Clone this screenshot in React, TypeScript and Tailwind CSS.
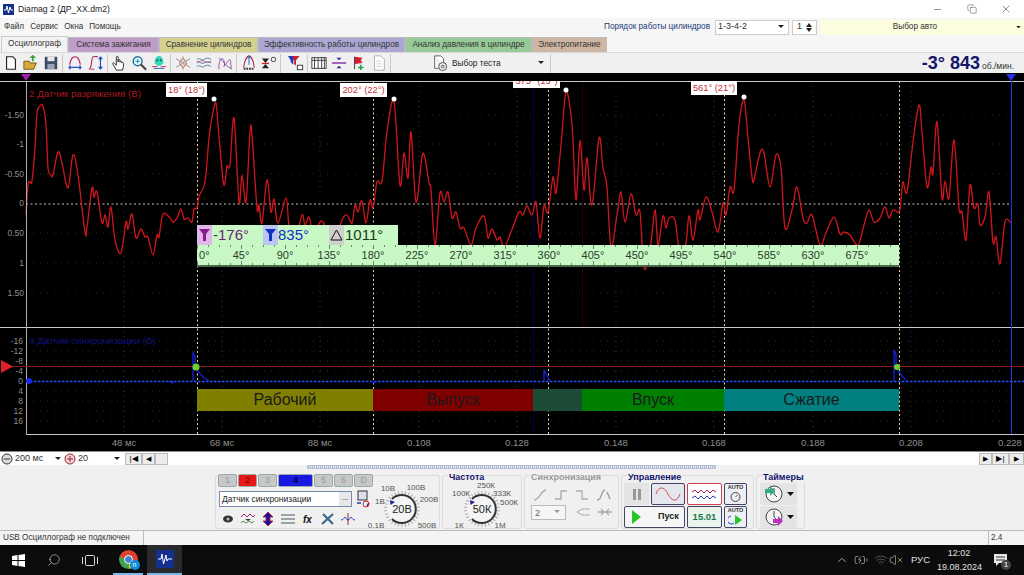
import { ChevronUp, Search, X, Minus, Copy, VolumeX, Wifi, BatteryCharging } from "lucide-react";
import type { ReactNode } from "react";

const font = { fontFamily: '"Liberation Sans", Arial, sans-serif' };

const wave: [number, number][] = [
  [26, 215], [28, 185], [30, 182], [32, 181], [35, 148], [37, 113], [40, 106], [43, 106], [46, 125], [48, 168], [51, 175], [53, 175], [58, 152], [62, 163], [68, 188], [73, 155], [78, 175], [85, 232], [87, 227], [92, 188], [94, 197], [97, 192], [102, 223], [105, 215], [108, 227], [111, 207], [115, 240], [121, 253], [126, 222], [128, 229], [132, 214], [136, 238], [141, 229], [145, 237], [148, 237], [153, 255], [157, 235], [159, 237], [163, 214], [170, 218], [173, 222], [177, 218], [181, 209], [184, 219], [188, 218], [192, 222], [194, 209], [197, 208], [199, 196], [205, 182], [209, 138], [213, 112], [216, 103], [218, 125], [223, 180], [225, 182], [227, 166], [230, 165], [234, 118], [239, 202], [242, 175], [246, 202], [250, 132], [252, 136], [257, 208], [259, 205], [262, 223], [267, 180], [271, 212], [274, 199], [278, 223], [286, 198], [289, 225], [295, 240], [302, 215], [305, 225], [309, 217], [313, 232], [320, 222], [323, 222], [328, 232], [335, 240], [342, 220], [347, 215], [352, 223], [355, 205], [358, 212], [362, 201], [366, 223], [370, 200], [373, 208], [377, 182], [382, 181], [387, 132], [394, 102], [400, 185], [404, 153], [408, 178], [411, 132], [416, 202], [422, 157], [425, 158], [429, 183], [431, 190], [435, 245], [440, 193], [444, 202], [448, 192], [452, 218], [456, 212], [460, 228], [464, 228], [471, 245], [476, 228], [484, 216], [488, 238], [492, 229], [497, 240], [500, 237], [504, 248], [511, 232], [519, 212], [523, 215], [527, 206], [532, 215], [536, 202], [540, 238], [544, 206], [548, 212], [553, 177], [556, 193], [561, 145], [566, 92], [572, 125], [576, 200], [580, 141], [584, 190], [587, 158], [592, 205], [599, 138], [603, 168], [607, 187], [611, 247], [617, 215], [621, 192], [625, 222], [631, 194], [636, 215], [640, 212], [644, 268], [650, 250], [655, 210], [658, 245], [663, 216], [666, 228], [669, 218], [675, 220], [679, 248], [685, 250], [689, 216], [693, 240], [698, 210], [700, 220], [706, 197], [712, 212], [718, 232], [723, 203], [726, 215], [730, 187], [734, 190], [739, 125], [744, 100], [748, 138], [752, 177], [754, 180], [760, 153], [764, 153], [770, 187], [776, 155], [781, 168], [785, 228], [792, 210], [797, 187], [803, 218], [807, 223], [812, 215], [820, 245], [826, 233], [834, 217], [840, 234], [844, 232], [850, 235], [858, 245], [864, 225], [869, 210], [874, 222], [880, 218], [885, 207], [889, 218], [893, 210], [899, 212], [901, 200], [903, 182], [907, 192], [913, 142], [919, 105], [922, 132], [927, 187], [931, 167], [933, 173], [937, 122], [942, 198], [945, 181], [949, 198], [954, 140], [959, 208], [962, 212], [966, 240], [970, 185], [974, 208], [978, 204], [980, 225], [985, 217], [989, 192], [993, 242], [996, 237], [1000, 264], [1005, 222], [1011, 223],
];

// catmull-rom through the trace points
function smooth(pts: [number, number][]) {
  let d = `M${pts[0][0]} ${pts[0][1]}`;
  for (let i = 0; i < pts.length - 1; i++) {
    const p0 = pts[Math.max(0, i - 1)];
    const p1 = pts[i];
    const p2 = pts[i + 1];
    const p3 = pts[Math.min(pts.length - 1, i + 2)];
    const c1x = p1[0] + (p2[0] - p0[0]) / 6;
    const c1y = p1[1] + (p2[1] - p0[1]) / 6;
    const c2x = p2[0] - (p3[0] - p1[0]) / 6;
    const c2y = p2[1] - (p3[1] - p1[1]) / 6;
    d += ` C${c1x.toFixed(1)} ${c1y.toFixed(1)} ${c2x.toFixed(1)} ${c2y.toFixed(1)} ${p2[0]} ${p2[1]}`;
  }
  return d;
}

const topLabels: [string, number][] = [["-1.50", 115], ["-1", 144], ["-0.50", 174], ["0", 203], ["0.50", 233], ["1", 263], ["1.50", 293]];
const lowLabels: [string, number][] = [["-16", 341], ["-12", 351], ["-8", 361], ["-4", 371], ["0", 381], ["4", 391], ["8", 401], ["12", 411], ["16", 421]];
const xLabels: [string, number][] = [["48 мс", 124], ["68 мс", 222], ["88 мс", 320], ["0.108", 419], ["0.128", 517], ["0.148", 616], ["0.168", 714], ["0.188", 813], ["0.208", 911], ["0.228", 1010]];
const degrees = [0, 45, 90, 135, 180, 225, 270, 315, 360, 405, 450, 495, 540, 585, 630, 675];
const tabs = [
  { name: "Система зажигания", w: "w-[91px]", bg: "bg-[#c09cc8]" },
  { name: "Сравнение цилиндров", w: "w-[99px]", bg: "bg-[#d4d190]" },
  { name: "Эффективность работы цилиндров", w: "w-[147px]", bg: "bg-[#aaa8d2]" },
  { name: "Анализ давления в цилиндре", w: "w-[127px]", bg: "bg-[#96ca96]" },
  { name: "Электропитание", w: "w-[75px]", bg: "bg-[#cfb6a2]" },
];

function Ic({ children, w = "w-[20px]" }: { children: ReactNode; w?: string }) {
  return (
    <div className={`${w} h-[20px] flex items-center justify-center shrink-0`}>
      <svg width="16" height="16" viewBox="0 0 18 18" fill="none">
        {children}
      </svg>
    </div>
  );
}

function Sep() {
  return <div className="w-[1px] h-[19px] bg-[#c9c9c9] mx-[1px] shrink-0" />;
}

function Toolbar() {
  return (
    <div className="h-[21px] bg-[#f0f0f0] border-t border-[#d8d8d8] flex items-center pl-[1px]">
      <Ic><path d="M4 2h7l3 3v11H4z" stroke="#222" fill="#fff" strokeWidth="1.300" /></Ic>
      <Ic><path d="M1 7h6l1 2h7l-3 7H1z" fill="#d8a838" stroke="#6a5010" /><path d="M10 7V3H7l4-3 4 3h-3v4z" fill="#3a9a3a" /></Ic>
      <Ic><path d="M2 2h14v14H2z" fill="#3c4a68" /><path d="M5 2h8v5H5z" fill="#e8e8e8" /><path d="M5 10h8v6H5z" fill="#9aa4b8" /></Ic>
      <Sep />
      <Ic w="w-[21px]"><path d="M3 11C4 4 7 2 9 2s5 2 6 9" stroke="#b02060" strokeWidth="1.300" /><path d="M2 14h14M2 14l2-2M2 14l2 2M16 14l-2-2M16 14l-2 2" stroke="#1c4fc0" strokeWidth="1.300" /></Ic>
      <Ic w="w-[21px]"><path d="M1 16c4 0 2-13 5-14s4 0 5 0" stroke="#b02060" strokeWidth="1.200" /><path d="M3 16h4" stroke="#b02060" /><path d="M14 2v14M14 2l-2 3M14 2l2 3M14 16l-2-3M14 16l2-3" stroke="#1c4fc0" strokeWidth="1.300" /></Ic>
      <Sep />
      <Ic><path d="M6 17l-4-7c-.5-1 1-2 2-.5l2 2V2.500c0-1.500 2-1.500 2 0V8V6c0-1.500 2-1.500 2 0v2c0-1.500 2-1.500 2 0v1c0-1 2-1 2 .5V13l-1 4z" stroke="#222" fill="#fff" strokeWidth="1" /></Ic>
      <Ic><circle cx="7.500" cy="7" r="5" stroke="#2a6a90" strokeWidth="1.600" fill="#dff" /><path d="M5 7h5M7.500 4.500v5" stroke="#2080b0" /><path d="M11 10.500l6 6" stroke="#444" strokeWidth="2.400" /></Ic>
      <Ic><path d="M4 9C4 3 7 1 9 1s5 2 5 8l-3 3H7z" fill="#30d8c0" /><path d="M1 13h6M11 13h6" stroke="#c03050" /><path d="M3 15h12" stroke="#2050a0" /><circle cx="7" cy="6" r="1.200" fill="#206060" /><circle cx="11" cy="6" r="1.200" fill="#206060" /></Ic>
      <Sep />
      <Ic w="w-[21px]"><path d="M1 4l16 10M1 14l16-10" stroke="#888" /><path d="M9 3l4 6-4 6-4-6z" stroke="#b05050" /><path d="M9 1v16" stroke="#d0b080" /></Ic>
      <Ic w="w-[21px]"><path d="M1 5c3-3 5 2 8 0s5-2 8 0M1 9c3-3 5 2 8 0s5-2 8 0M1 13c3-3 5 2 8 0s5-2 8 0" stroke="#4a78a0" /><path d="M1 7c3 2 5-2 8 0s5 2 8 0" stroke="#b06090" /></Ic>
      <Ic w="w-[21px]"><path d="M2 16C2 4 6 1 8 7s-3 9 2 3 5-9 6 6" stroke="#a040a0" /><path d="M2 4c5 1 8 10 14 11" stroke="#406090" /></Ic>
      <Sep />
      <Ic w="w-[21px]"><path d="M3 14C4 5 7 1 9 1s5 4 6 13" stroke="#a02040" strokeWidth="1.200" /><path d="M9 2v9M9 2L7 4M9 2l2 2" stroke="#1c4fc0" /><path d="M3 15.500h12" stroke="#333" strokeWidth="2.400" strokeDasharray="2 1" /></Ic>
      <Ic><path d="M1 4h8L5 9zM1 15h8L5 10z" fill="#222" /><path d="M1 9.500h8" stroke="#d02020" strokeWidth="1.500" /><circle cx="14" cy="5" r="2.500" stroke="#333" /></Ic>
      <Sep />
      <div className="w-[3px] shrink-0" />
      <Ic w="w-[21px]"><path d="M0 1h9L6 6v5L3 8V6z" fill="#1c3cc0" /><path d="M5 1h8L9 6v6L7 10V6z" fill="#d02020" /><rect x="10.500" y="11.500" width="6" height="5" stroke="#333" fill="#fff" /></Ic>
      <Sep />
      <Ic><rect x="1" y="3" width="16" height="12" stroke="#333" fill="#fff" /><path d="M1 6h16M4 3v12M8 3v12M12 3v12M15 3v12" stroke="#333" /></Ic>
      <Ic><path d="M1 9h16" stroke="#8020a0" strokeWidth="1.500" /><path d="M6 3h6L9 6zM6 15h6L9 12z" fill="#303090" /></Ic>
      <Ic><path d="M4 2l9 1-2 3 2 3-9 1z" fill="#d02030" /><path d="M4 2v14" stroke="#333" /><path d="M8 14h6M11 11v6" stroke="#20a040" strokeWidth="1.600" /></Ic>
      <Ic><path d="M4 1h7l4 4v12H4z" stroke="#aaa" fill="#fff" /><path d="M6 7h6M6 10h6M6 13h6" stroke="#ccc" /></Ic>
      <Sep />
      <div className="w-[38px] shrink-0" />
      <Ic><path d="M3 1h7l3 3v5M3 1v14h4" stroke="#555" fill="#fff" /><circle cx="12" cy="13" r="4.500" stroke="#444" fill="#eee" /><circle cx="12" cy="13" r="1.500" stroke="#444" /></Ic>
      <span className="text-[8.300px] text-[#222] ml-[2px] w-[86px] shrink-0">Выбор теста</span>
      <svg width="6" height="4" viewBox="0 0 6 4" className="mr-[5px] shrink-0"><path d="M0 0h6L3 3z" fill="#222" /></svg>
      <Sep />
      <div className="flex-1 flex justify-end items-baseline pr-[10px]">
        <span className="text-[18px] leading-[20px] font-bold text-[#14146e]">-3° 843</span>
        <span className="text-[8.500px] text-[#333] ml-[2px]">об./мин.</span>
      </div>
    </div>
  );
}

function Chart() {
  return (
    <div className="relative h-[378px] bg-black overflow-hidden text-[#8e8e8e] text-[10px]">
      <svg className="absolute inset-0 w-full h-full" viewBox="0 73 1024 378" fill="none">
        {/* faint grid */}
        {[124, 222, 320, 419, 517, 616, 714, 813, 911].map((x) => (
          <path key={x} d={`M${x} 81V434`} stroke="#333" strokeDasharray="1 4" />
        ))}
        {[115, 144, 174, 233, 263, 293, 341, 351, 361, 371, 391, 401, 411, 421].map((y) => (
          <path key={y} d={`M26 ${y}H1011`} stroke="#2c2c2c" strokeDasharray="1 6" />
        ))}
        <path d="M533.500 81V434" stroke="#000050" />
        <path d="M582.500 81V327" stroke="#2a0000" />
        {[197.5, 373.5, 548.5, 724.5, 899.5].map((x) => (
          <path key={x} d={`M${x} 81V434`} stroke="#e8dca0" strokeDasharray="2 2.500" />
        ))}
        <path d="M26 204H1011" stroke="#c8c8c8" strokeDasharray="2 2.500" />
        <path d={smooth(wave)} stroke="#d0161c" strokeWidth="1.300" strokeLinejoin="round" />
        {/* axes */}
        <path d="M0 81.500H1024M0 327.500H1024M26 434.500H1024" stroke="#c8c8c8" />
        <path d="M26.500 81V434" stroke="#b0b0b0" />
        <path d="M1011.500 81V434" stroke="#2a30e8" />
        <path d="M21 74h10l-5 7z" fill="#a020b0" />
        <path d="M1006 74h10l-5 7z" fill="#2a30e8" />
        {/* sync channel */}
        <path d="M12 366.500H1024" stroke="#8a1a1a" />
        <path d="M26 381.500H1024" stroke="#3050ff" strokeWidth="1.500" strokeDasharray="2.500 1.500" />
        <path d="M193 381V353l2 3v12l8 9 6 4M544 381v-11l3 6 3 5M894 381V350l2 4v14l6 8 5 5M169 381l3 2 3-2M371 381l3 2 3-2" stroke="#1420e0" strokeWidth="1.300" />
        <path d="M1 360l12 6.500-12 6.500z" fill="#e0202a" />
        <circle cx="29" cy="381" r="3" fill="#1828e8" />
        <circle cx="196" cy="367" r="3.500" fill="#70d030" />
        <circle cx="897" cy="367" r="3" fill="#70d030" />
        <circle cx="214" cy="99" r="2.500" fill="#fff" />
        <circle cx="394" cy="99" r="2.500" fill="#fff" />
        <circle cx="566" cy="90" r="2.500" fill="#fff" />
        <circle cx="744" cy="97" r="2.500" fill="#fff" />
      </svg>

      <div className="absolute left-[29px] top-[14px] text-[9.800px] text-[#a81820]">2 Датчик разряжения (В)</div>
      <div className="absolute left-[29px] top-[261px] text-[9.800px] text-[#10107c]">4 Датчик синхронизации (В)</div>

      {topLabels.map(([t, y]) => (
        <div key={t} className="absolute left-0 w-[24px] text-right text-[8.500px] leading-[10px]" style={{ top: y - 73 - 5 }}>{t}</div>
      ))}
      {lowLabels.map(([t, y]) => (
        <div key={t} className="absolute left-0 w-[23px] text-right text-[8.500px] leading-[10px]" style={{ top: y - 73 - 5 }}>{t}</div>
      ))}
      {xLabels.map(([t, x]) => (
        <div key={t} className="absolute w-[40px] text-center text-[9.500px] leading-[12px]" style={{ left: x - 20, top: 364 }}>{t}</div>
      ))}

      <div className="absolute left-[166px] top-[10px] w-[41px] h-[14px] bg-white text-[#c03038] text-[9.300px] leading-[14px] text-center">18° (18°)</div>
      <div className="absolute left-[340px] top-[10px] w-[47px] h-[14px] bg-white text-[#c03038] text-[9.300px] leading-[14px] text-center">202° (22°)</div>
      <div className="absolute left-[513px] top-[8px] w-[47px] h-[7px] bg-white text-[#c03038] text-[9.300px] leading-[14px] flex items-end justify-center overflow-hidden">375° (15°)</div>
      <div className="absolute left-[691px] top-[8px] w-[46px] h-[14px] bg-white text-[#c03038] text-[9.300px] leading-[14px] text-center">561° (21°)</div>

      {/* measure box + degree ruler */}
      <div className="absolute left-[197px] top-[152px] w-[702px]">
        <div className="w-[201px] h-[20px] bg-[#c8f8c4] flex items-center text-[15px] leading-[20px]">
          <div className="w-[15px] h-full bg-[#e0b8e8] flex items-center justify-center">
            <svg width="13" height="14" viewBox="0 0 13 14"><path d="M1 1h11L8 6v7H5V6z" fill="#8a1a90" /></svg>
          </div>
          <span className="text-[#6a2a70] w-[51px] pl-[1px]">-176°</span>
          <div className="w-[15px] h-full bg-[#bcc4f4] flex items-center justify-center">
            <svg width="13" height="14" viewBox="0 0 13 14"><path d="M1 1h11L8 6v7H5V6z" fill="#1430c0" /></svg>
          </div>
          <span className="text-[#1430c0] w-[51px]">835°</span>
          <div className="w-[15px] h-full bg-[#cfcfcf] flex items-center justify-center">
            <svg width="13" height="12" viewBox="0 0 13 12"><path d="M6.500 1L12 11H1z" stroke="#111" fill="none" /></svg>
          </div>
          <span className="text-[#1a3a1a] pl-[1px]">1011°</span>
        </div>
        <div className="relative h-[22px] bg-[#c8f8c4] flex border-b-2 border-[#4a6a4a] text-[11px] text-[#2c3c2c]">
          {degrees.map((d) => (
            <div key={d} className="w-[44px] h-full flex items-center shrink-0">
              <span className={d === 0 ? "pl-[2px]" : "-translate-x-1/2"}>{d}°</span>
            </div>
          ))}
          <div className="absolute inset-x-0 top-0 h-[2px] bg-[repeating-linear-gradient(90deg,#6a8a6a_0,#6a8a6a_1px,transparent_1px,transparent_11px)]" />
          <div className="absolute inset-x-0 top-0 h-[4px] bg-[repeating-linear-gradient(90deg,#6a8a6a_0,#6a8a6a_1px,transparent_1px,transparent_44px)]" />
          <div className="absolute inset-x-0 bottom-0 h-[2px] bg-[repeating-linear-gradient(90deg,#6a8a6a_0,#6a8a6a_1px,transparent_1px,transparent_11px)]" />
          <div className="absolute inset-x-0 bottom-0 h-[4px] bg-[repeating-linear-gradient(90deg,#6a8a6a_0,#6a8a6a_1px,transparent_1px,transparent_44px)]" />
        </div>
      </div>

      {/* strokes */}
      <div className="absolute left-[197px] top-[316px] w-[702px] h-[22px] flex text-[16px] leading-[22px] text-center text-[#1a1a1a]">
        <div className="w-[176px] bg-[#808000]">Рабочий</div>
        <div className="w-[160px] bg-[#800000]">Выпуск</div>
        <div className="w-[49px] bg-[#1c4c38]" />
        <div className="w-[142px] bg-[#008000]">Впуск</div>
        <div className="w-[175px] bg-[#008080]">Сжатие</div>
      </div>
    </div>
  );
}

function ScrollRow() {
  return (
    <div className="h-[14px] bg-white flex items-center border-t border-[#888] text-[9px] text-[#333]">
      <svg width="12" height="12" viewBox="0 0 12 12" className="ml-[1px]"><circle cx="6" cy="6" r="5" fill="#ddd" stroke="#333" /><path d="M3 6h6" stroke="#333" /></svg>
      <span className="w-[42px] pl-[2px]">200 мс</span>
      <svg width="6" height="4" viewBox="0 0 6 4"><path d="M0 0h6L3 3z" fill="#222" /></svg>
      <svg width="12" height="12" viewBox="0 0 12 12" className="ml-[3px]"><circle cx="6" cy="6" r="5" fill="#f0d8d8" stroke="#a02030" /><path d="M3 6h6M6 3v6" stroke="#a02030" /></svg>
      <span className="w-[38px] pl-[2px]">20</span>
      <svg width="6" height="4" viewBox="0 0 6 4"><path d="M0 0h6L3 3z" fill="#222" /></svg>
      <div className="w-[17px] h-[12px] ml-[5px] bg-[#ececec] border border-[#bbb] flex items-center justify-center text-[8px] leading-none text-black">|◀</div>
      <div className="w-[13px] h-[12px] bg-[#ececec] border border-[#bbb] flex items-center justify-center text-[7px] leading-none text-black">◀</div>
      <div className="w-[13px] h-[12px] bg-[#ececec] border border-[#bbb]" />
      <div className="flex-1" />
      <div className="w-[13px] h-[12px] bg-[#ececec] border border-[#bbb] flex items-center justify-center text-[7px] leading-none text-black">▶</div>
      <div className="w-[17px] h-[12px] bg-[#ececec] border border-[#bbb] flex items-center justify-center text-[8px] leading-none text-black">▶|</div>
      <div className="w-[15px] h-[12px] bg-[#ececec] border border-[#bbb] flex items-center justify-center text-[7px] leading-none text-black">▶</div>
    </div>
  );
}

function ChannelBtn({ label, w = "w-[19px]", cls = "bg-[#c8c8c8] text-[#999]" }: { label: string; w?: string; cls?: string }) {
  return <div className={`${w} ${cls} h-[13px] border border-[#9aa] rounded-[2px] flex items-center justify-center text-[9px] leading-none`}>{label}</div>;
}

function Knob({ value, labels }: { value: string; labels: [string, number, number][] }) {
  const ticks = Array.from({ length: 30 }, (_, i) => i * 12);
  return (
    <svg width="74" height="56" viewBox="0 0 74 56" fill="none">
      {ticks.map((a) => (
        <path key={a} d="M37 18v-3" stroke="#aaa" transform={`rotate(${a} 37 33)`} />
      ))}
      <circle cx="37" cy="33" r="14" fill="#f4f4f4" />
      <path d="M27 43a14 14 0 1 0 0-20" stroke="#333" strokeWidth="2" />
      <path d="M25 24l5 2-4.500 3z" fill="#2020a0" />
      <text x="37" y="37" textAnchor="middle" fontSize="11" fill="#222" style={font}>{value}</text>
      {labels.map(([t, x, y]) => (
        <text key={t} x={x} y={y} textAnchor="middle" fontSize="8" fill="#555" style={font}>{t}</text>
      ))}
    </svg>
  );
}

function Group({ title, w, titleCls = "text-[#14146e]", children }: { title?: string; w: string; titleCls?: string; children: ReactNode }) {
  return (
    <div className={`${w} relative h-[54px] border border-[#dcdcdc] rounded-[3px] shrink-0`}>
      {title && <div className={`absolute left-[5px] -top-[4px] px-[1px] bg-[#f0f0f0] text-[9px] leading-[11px] font-bold whitespace-nowrap ${titleCls}`}>{title}</div>}
      {children}
    </div>
  );
}

function SmallIcon({ children }: { children: ReactNode }) {
  return (
    <svg width="18" height="16" viewBox="0 0 18 16" fill="none" className="shrink-0">
      {children}
    </svg>
  );
}

function Panel() {
  return (
    <div className="h-[66px] bg-[#f0f0f0] border-b border-[#bcbcbc] relative">
      <div className="absolute left-[307px] top-[0px] w-[409px] h-[4px] bg-[repeating-linear-gradient(90deg,#a8b4c8_0,#a8b4c8_1px,#eef_1px,#eef_2px)] border border-[#b4c0d8] rounded-[1px]" />
      <div className="flex pl-[215px] pt-[10px] gap-[2px]">
        <Group w="w-[225px]">
          <div className="flex gap-[1px] pl-[2px] -mt-[2px]">
            <ChannelBtn label="1" />
            <ChannelBtn label="2" cls="bg-[#e81818] text-[#700]" />
            <ChannelBtn label="3" />
            <ChannelBtn label="4" w="w-[35px]" cls="bg-[#1818e0] text-[#004] font-bold" />
            <ChannelBtn label="5" />
            <ChannelBtn label="6" />
            <ChannelBtn label="D" />
          </div>
          <div className="flex">
            <div className="mt-[4px] ml-[3px] w-[133px] h-[16px] bg-white border border-[#7a8ab0] flex items-center text-[8.500px] text-[#222] pl-[2px]">
              <span className="flex-1">Датчик синхронизации</span>
              <span className="w-[12px] h-[14px] bg-[#e8e8e8] text-[8px] text-center leading-[12px]">...</span>
            </div>
            <svg width="16" height="18" viewBox="0 0 16 18" fill="none" className="ml-[3px] mt-[3px]">
              <rect x="3" y="1" width="9" height="9" fill="#dde" stroke="#333" />
              <path d="M2 13h4M14 13l-2 3" stroke="#1c3cc0" strokeWidth="1.500" />
              <circle cx="11" cy="14" r="3" stroke="#d02020" />
            </svg>
          </div>
          <div className="flex items-center pl-[3px] mt-[3px] gap-[2px]">
            <SmallIcon><ellipse cx="9" cy="8" rx="5" ry="3.500" fill="#333" /><circle cx="9" cy="8" r="1.500" fill="#bbb" /></SmallIcon>
            <SmallIcon><path d="M2 6l3-3 3 3 3-3 3 3 2-2" stroke="#a02080" /><path d="M2 12l2-2 3 2 3-2 3 2 2-2" stroke="#509050" /><path d="M6 8h6l-3 2z" fill="#333" /></SmallIcon>
            <SmallIcon><path d="M9 1l5 5h-3v4h3l-5 5-5-5h3V6H4z" fill="#1414a0" stroke="#c02040" /></SmallIcon>
            <SmallIcon><path d="M2 4h14M2 8h14M2 12h14" stroke="#555" /></SmallIcon>
            <SmallIcon><text x="4" y="12" fontSize="10" fontWeight="bold" fontStyle="italic" fill="#111" style={font}>fx</text></SmallIcon>
            <SmallIcon><path d="M3 13L14 3M4 3l10 10" stroke="#3a6a90" strokeWidth="2.200" /></SmallIcon>
            <SmallIcon><path d="M9 2v12" stroke="#a02040" /><path d="M2 9c3 0 3-3 4-3s1 3 3 3 2-3 3-3 1 3 4 3" stroke="#2040c0" /></SmallIcon>
          </div>
          <div className="absolute right-0 top-0">
            <Knob value="20В" labels={[["10В", 23, 15], ["100В", 51, 14], ["1В", 15, 28], ["200В", 64, 26], ["0.1В", 11, 52], ["500В", 62, 52]]} />
          </div>
        </Group>
        <Group title="Частота" w="w-[80px]">
          <div className="absolute left-[2px] top-0">
            <Knob value="50К" labels={[["100К", 16, 20], ["250К", 41, 12], ["333К", 57, 20], ["500К", 64, 29], ["1К", 14, 52], ["1М", 55, 52]]} />
          </div>
        </Group>
        <Group title="Синхронизация" titleCls="text-[#9a9a9a]" w="w-[95px]">
          <div className="flex pl-[7px] pt-[11px] gap-[3px]">
            <SmallIcon><path d="M2 13c6 0 6-9 12-10" stroke="#aaa" strokeWidth="1.300" /></SmallIcon>
            <SmallIcon><path d="M2 12h6V4h6M8 10V6" stroke="#aaa" strokeWidth="1.300" /></SmallIcon>
            <SmallIcon><path d="M2 4h6v8h6M8 6v4" stroke="#aaa" strokeWidth="1.300" /></SmallIcon>
            <SmallIcon><path d="M2 13c6 0 3-9 8-10M12 5l3 7" stroke="#999" strokeWidth="1.300" /></SmallIcon>
          </div>
          <div className="flex pl-[6px] pt-[1px] items-center">
            <div className="w-[35px] h-[15px] bg-[#f6f6f6] border border-[#bbb] text-[9.500px] text-[#666] pl-[3px] leading-[13px] flex items-center">
              <span className="flex-1">2</span>
              <svg width="6" height="4" viewBox="0 0 6 4" className="mr-[5px]"><path d="M0 0h6L3 3z" fill="#999" /></svg>
            </div>
            <div className="ml-[9px] flex gap-[3px]">
              <SmallIcon><path d="M2 8l5-3h8M2 8l5 3h8" stroke="#aaa" /></SmallIcon>
              <SmallIcon><path d="M2 8h14M5 5l3 3-3 3M13 5l-3 3 3 3" stroke="#aaa" strokeWidth="1.300" /></SmallIcon>
            </div>
          </div>
        </Group>
        <Group title="Управление" w="w-[133px]">
          <div className="flex gap-[2px] pl-[2px] pt-[7px]">
            <div className="w-[25px] h-[22px] bg-[#e4e4e4] flex items-center justify-center gap-[2px]">
              <div className="w-[3px] h-[11px] bg-[#999]" />
              <div className="w-[3px] h-[11px] bg-[#999]" />
            </div>
            <div className="w-[34px] h-[22px] bg-[#e4e8ee] border border-[#446] rounded-[2px] flex items-center justify-center">
              <svg width="26" height="14" viewBox="0 0 26 14" fill="none"><path d="M1 7c3-8 8-8 12 0s9 8 12 0" stroke="#d04040" /></svg>
            </div>
            <div className="w-[35px] h-[22px] bg-white border border-[#d04050] rounded-[2px] flex items-center justify-center">
              <svg width="28" height="15" viewBox="0 0 28 15" fill="none"><path d="M1 5l3-2 3 3 3-3 3 3 3-3 3 3 3-3 3 2" stroke="#b02060" /><path d="M1 11l3-2 3 3 3-3 3 3 3-3 3 3 3-3 3 2" stroke="#2040b0" /></svg>
            </div>
            <div className="w-[23px] h-[22px] bg-[#eceff4] border border-[#446] rounded-[2px] flex flex-col items-center leading-none">
              <span className="text-[5.500px] font-bold text-[#333] mt-[1px]">AUTO</span>
              <svg width="13" height="12" viewBox="0 0 13 12" fill="none"><circle cx="6.500" cy="6" r="4.500" stroke="#444" /><path d="M6.500 6l2-2" stroke="#a02040" /></svg>
            </div>
          </div>
          <div className="flex gap-[2px] pl-[2px] pt-[1px]">
            <div className="w-[61px] h-[22px] bg-[#f6f6f6] border border-[#446] rounded-[2px] flex items-center">
              <svg width="11" height="16" viewBox="0 0 11 16" className="ml-[6px]"><path d="M1 1l9 7-9 7z" fill="#28c428" /></svg>
              <span className="text-[9px] font-bold text-[#222] ml-[16px]">Пуск</span>
            </div>
            <div className="w-[35px] h-[22px] bg-[#eaf4ec] border border-[#446] rounded-[2px] flex items-center justify-center text-[9.500px] font-bold text-[#187a48]">15.01</div>
            <div className="w-[23px] h-[22px] bg-[#eceff4] border border-[#446] rounded-[2px] flex flex-col items-center leading-none">
              <span className="text-[5.500px] font-bold text-[#333] mt-[1px]">AUTO</span>
              <svg width="15" height="12" viewBox="0 0 15 12"><path d="M3 2a4 4 0 1 0 3 7" stroke="#1c3cc0" fill="none" /><path d="M7 1l7 5-7 5z" fill="#28c428" /></svg>
            </div>
          </div>
        </Group>
        <Group title="Таймеры" w="w-[49px]">
          <div className="flex flex-col gap-[1px] pl-[3px] pt-[7px]">
            {[0, 1].map((i) => (
              <div key={i} className="w-[37px] h-[22px] bg-[#e4e4e4] rounded-[2px] flex items-center justify-center gap-[3px]">
                <svg width="20" height="20" viewBox="0 0 20 20" fill="none">
                  <circle cx="10" cy="10" r="8" stroke="#444" fill="#f4f4f4" />
                  <path d="M10 4v6l3 3" stroke="#444" />
                  {i === 0 ? <path d="M1 5h5V2l5 5-5 5V9H1z" fill="#30b080" /> : <path d="M9 12h5V9l5 5-5 5v-3H9z" fill="#c030c0" />}
                </svg>
                <svg width="7" height="4" viewBox="0 0 7 4"><path d="M0 0h7L3.500 4z" fill="#111" /></svg>
              </div>
            ))}
          </div>
        </Group>
      </div>
    </div>
  );
}

export default function App() {
  return (
    <div className="w-[1024px] h-[575px] overflow-hidden bg-[#f0f0f0]" style={font}>
      {/* title bar */}
      <div className="h-[18px] bg-white flex items-center text-[8.600px] text-[#222]">
        <svg width="11" height="11" viewBox="0 0 11 11" className="ml-[3px] mr-[4px]"><rect width="11" height="11" fill="#12308c" /><path d="M1 6h2l1-4 1.500 7L7 3l1 3h2" stroke="#fff" fill="none" /></svg>
        <span>Diamag 2 (ДР_XX.dm2)</span>
        <div className="flex-1" />
        <Minus size={11} strokeWidth={1} className="mr-[24px]" />
        <Copy size={10} strokeWidth={1} className="mr-[23px]" />
        <X size={12} strokeWidth={1} className="mr-[12px]" />
      </div>
      {/* menu row */}
      <div className="h-[18px] bg-[#f6f6f6] flex items-center text-[8.200px] text-[#333]">
        <span className="ml-[4px]">Файл</span>
        <span className="ml-[6px]">Сервис</span>
        <span className="ml-[6px]">Окна</span>
        <span className="ml-[6px]">Помощь</span>
        <div className="flex-1" />
        <span className="text-[#1a3a7a] mr-[5px]">Порядок работы цилиндров</span>
        <div className="w-[74px] h-[15px] bg-white border border-[#ccc] flex items-center pl-[2px] text-[9px]">
          <span className="flex-1">1-3-4-2</span>
          <svg width="6" height="4" viewBox="0 0 6 4" className="mr-[4px]"><path d="M0 0h6L3 3z" fill="#222" /></svg>
        </div>
        <div className="w-[25px] h-[15px] ml-[3px] bg-white border border-[#ccc] flex items-center pl-[4px] text-[9px]">
          <span className="flex-1">1</span>
          <span className="flex flex-col gap-[1px] mr-[4px]">
            <svg width="6" height="4" viewBox="0 0 6 4"><path d="M0 4h6L3 0z" fill="#222" /></svg>
            <svg width="6" height="4" viewBox="0 0 6 4"><path d="M0 0h6L3 4z" fill="#222" /></svg>
          </span>
        </div>
        <div className="w-[204px] h-[15px] ml-[3px] bg-[#fdfde0] flex items-center">
          <span className="flex-1 text-center pr-[6px]">Выбор авто</span>
          <svg width="5" height="3" viewBox="0 0 6 4" className="mr-[3px]"><path d="M0 0h6L3 3z" fill="#222" /></svg>
        </div>
      </div>
      {/* tabs */}
      <div className="h-[16px] bg-[#f6f6f6] flex items-end pl-[1px] text-[8.200px] text-[#333]">
        <div className="w-[67px] h-[16px] bg-[#f4f4f4] border border-b-0 border-[#ccc] flex items-center justify-center">Осциллограф</div>
        {tabs.map((t) => (
          <div key={t.name} className={`${t.w} ${t.bg} h-[15px] border border-b-0 border-[#bbb] flex items-center justify-center whitespace-nowrap`}>
            {t.name}
          </div>
        ))}
      </div>
      <Toolbar />
      <Chart />
      <ScrollRow />
      <Panel />
      {/* status bar */}
      <div className="h-[14px] bg-[#f4f4f4] flex items-center text-[8.200px] text-[#333]">
        <div className="w-[144px] h-full border-r border-[#bbb] pl-[3px] leading-[14px] whitespace-nowrap">USB Осциллограф не подключен</div>
        <div className="flex-1" />
        <div className="w-[36px] h-full border-l border-[#bbb] pl-[2px] leading-[14px]">2.4</div>
      </div>
      {/* taskbar */}
      <div className="h-[30px] bg-[#0c0c0c] flex items-center text-[#e0e0e0]">
        <div className="w-[36px] flex justify-center">
          <svg width="13" height="13" viewBox="0 0 13 13"><path d="M0 2l5.500-1v5H0zM6.500 1L13 0v6H6.500zM0 7h5.500v5L0 11zM6.500 7H13v6l-6.500-1z" fill="#fff" /></svg>
        </div>
        <div className="w-[36px] flex justify-center"><Search size={14} strokeWidth={1} className="-scale-x-100" /></div>
        <div className="w-[36px] flex justify-center">
          <svg width="16" height="13" viewBox="0 0 16 13" fill="none" stroke="#ddd"><rect x="3.500" y="1.500" width="9" height="10" rx="1" /><path d="M.5 3v7M15.500 3v7" /></svg>
        </div>
        <div className="w-[30px] h-full ml-[5px] relative flex items-center justify-center border-b-2 border-[#76b9ed]">
          <div className="w-[19px] h-[19px] rounded-full bg-[conic-gradient(#e04030_0_33%,#e8c030_33%_50%,#40a050_50%_80%,#e04030_80%)] relative">
            <div className="absolute inset-[5px] rounded-full bg-[#4080d0] border border-white" />
            <div className="absolute -right-[2px] -bottom-[1px] w-[10px] h-[10px] rounded-full bg-[#0a8cd8] text-[7px] leading-[10px] text-center text-white">n</div>
          </div>
        </div>
        <div className="w-[35px] h-full ml-[4px] bg-[#2a2a2e] flex items-center justify-center border-b-2 border-[#76b9ed]">
          <svg width="18" height="18" viewBox="0 0 18 18" fill="none"><rect width="18" height="18" fill="#12308c" rx="1" /><path d="M2 9h3l1-5 1.500 10L10 5l1 6 1-2h4" stroke="#fff" /></svg>
        </div>
        <div className="flex-1" />
        <ChevronUp size={14} strokeWidth={1.200} className="mr-[5px]" />
        <BatteryCharging size={14} strokeWidth={1} className="mr-[6px]" />
        <Wifi size={14} strokeWidth={1} className="mr-[1px] text-[#888]" />
        <VolumeX size={14} strokeWidth={1} className="mr-[8px]" />
        <span className="text-[9.500px] mr-[7px]">РУС</span>
        <div className="text-[9px] text-center leading-[14px] w-[44px] mr-[12px]">
          <div>12:02</div>
          <div>19.08.2024</div>
        </div>
        <div className="relative mr-[16px]">
          <svg width="15" height="14" viewBox="0 0 15 14"><path d="M1 1h13v9H6l-3 3v-3H1z" fill="#e8e8e8" /><path d="M3 4h9M3 7h9" stroke="#333" /></svg>
          <div className="absolute -right-[3px] -bottom-[3px] w-[10px] h-[10px] rounded-full bg-[#444] text-[8px] leading-[10px] text-center text-white">1</div>
        </div>
      </div>
    </div>
  );
}
